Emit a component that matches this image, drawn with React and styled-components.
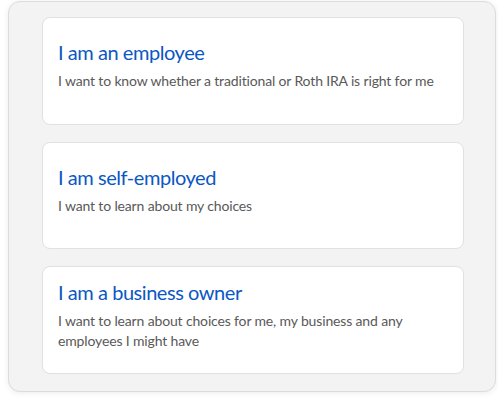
import React from "react";
import styled, { createGlobalStyle } from "styled-components";

const Global = createGlobalStyle`
  html, body { margin: 0; padding: 0; background: #ffffff; }
  body { font-family: Lato, "Noto Sans", sans-serif; }
`;

const Page = styled.div`
  padding: 1px 2px 8px 8px;
`;

const Panel = styled.div`
  box-sizing: border-box;
  height: 391px;
  background: #f3f3f3;
  border: 1px solid #dcdcdc;
  border-radius: 12px;
  box-shadow: 0 1px 6px rgba(0, 0, 0, 0.08);
  padding: 15px 31px 0 33px;
  display: flex;
  flex-direction: column;
  gap: 17px;
`;

const Card = styled.a`
  box-sizing: border-box;
  height: 107.5px;
  flex-shrink: 0;
  background: #ffffff;
  border: 1px solid #e1e1e1;
  border-radius: 8px;
  padding: 0 15px;
  display: flex;
  flex-direction: column;
  justify-content: center;
  text-decoration: none;
  cursor: pointer;
`;

const Title = styled.div`
  color: #0b57c4;
  font-size: 20px;
  line-height: 26px;
  letter-spacing: -0.45px;
  margin-top: ${(p) => p.$shift}px;
`;

const Desc = styled.div`
  color: #595959;
  font-size: 14px;
  line-height: 19.5px;
  letter-spacing: -0.15px;
  margin-top: 6px;
`;

const items = [
  { t: "I am an employee", d: "I want to know whether a traditional or Roth IRA is right for me", s: -12 },
  { t: "I am self-employed", d: "I want to learn about my choices", s: -12 },
  { t: "I am a business owner", d: "I want to learn about choices for me, my business and any employees I might have", s: -10 },
];

export default function App() {
  return (
    <>
      <Global />
      <Page>
        <Panel>
          {items.map((it) => (
            <Card key={it.t}>
              <Title $shift={it.s}>{it.t}</Title>
              <Desc>{it.d}</Desc>
            </Card>
          ))}
        </Panel>
      </Page>
    </>
  );
}
